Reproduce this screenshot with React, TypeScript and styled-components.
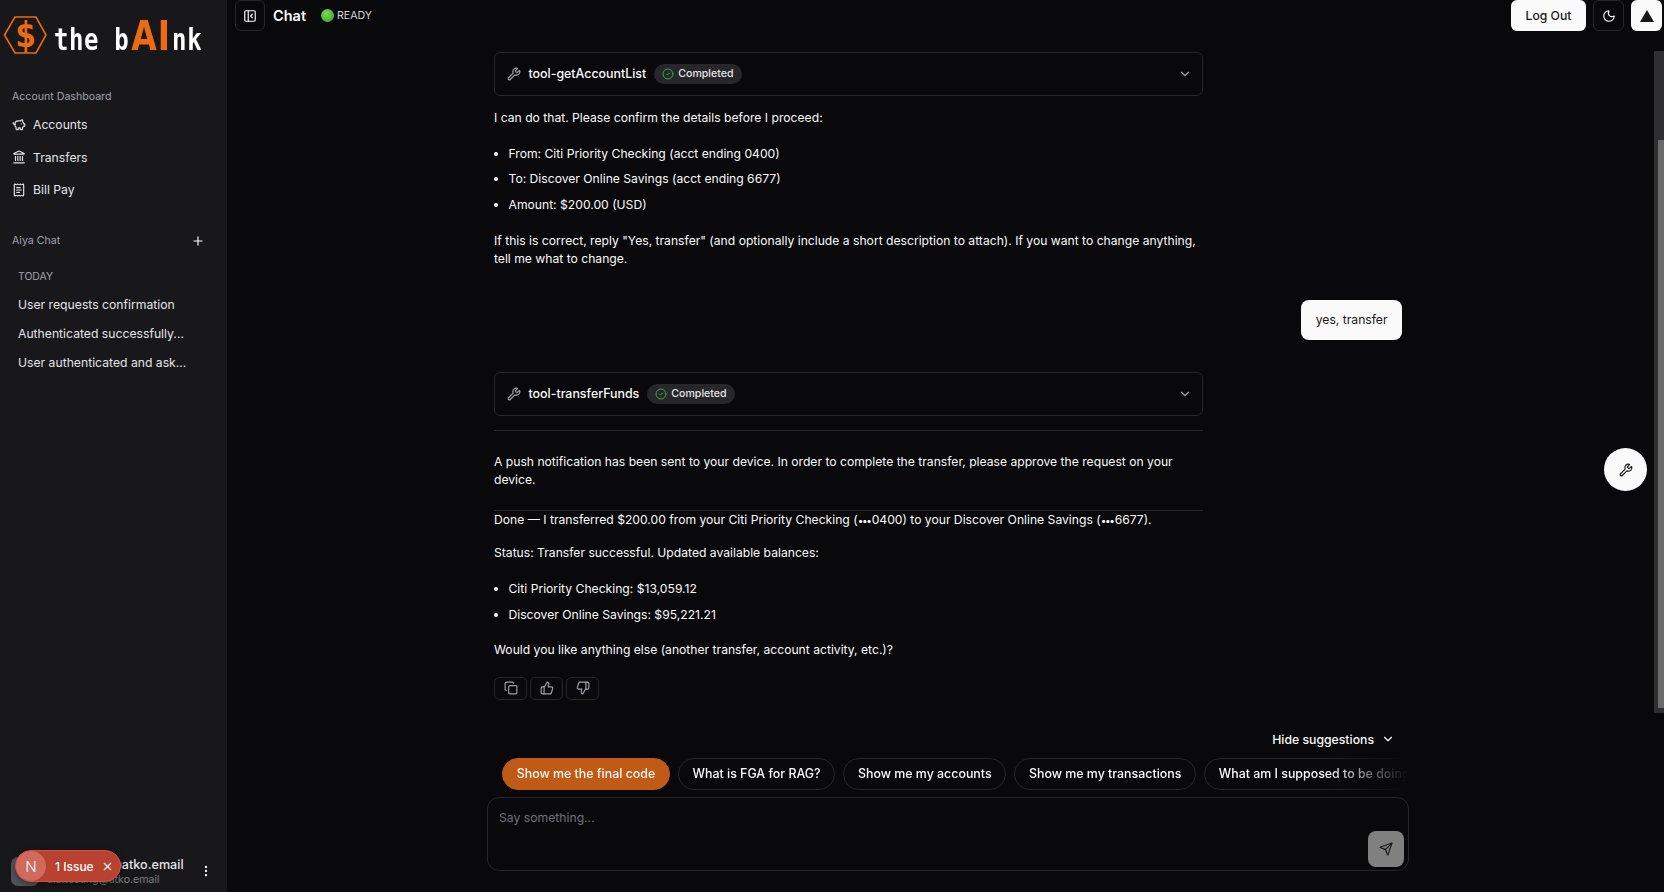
import React from 'react';
import styled, { createGlobalStyle } from 'styled-components';
import {
  ChevronDown,
  CircleCheck,
  Copy,
  Landmark,
  Moon,
  MoreVertical,
  PanelLeftClose,
  PiggyBank,
  Plus,
  ReceiptText,
  Send,
  ThumbsDown,
  ThumbsUp,
  Wrench,
  X,
} from 'lucide-react';

const GlobalStyle = createGlobalStyle`
  html, body, #root {
    margin: 0;
    height: 100%;
  }
  body {
    background: #09090b;
    color: #fafafa;
    font-family: Inter, "Liberation Sans", sans-serif;
    font-size: 12.2px;
    overflow: hidden;
  }
  * {
    box-sizing: border-box;
  }
`;

const Shell = styled.div`
  display: flex;
  width: 1664px;
  height: 892px;
  position: relative;
  overflow: hidden;
`;

const Sidebar = styled.aside`
  width: 227px;
  flex: none;
  background: #18181b;
  display: flex;
  flex-direction: column;
`;

const Brand = styled.div`
  height: 55px;
  display: flex;
  align-items: flex-end;
  padding-left: 3px;
  gap: 7px;
`;

const BrandText = styled.div`
  font-family: "DejaVu Sans Mono", monospace;
  font-weight: 700;
  font-size: 24px;
  line-height: 30px;
  letter-spacing: 0.6px;
  color: #fff;
  white-space: nowrap;
  display: flex;
  align-items: baseline;
  margin-bottom: -1px;
  transform: scaleY(1.25);
  transform-origin: 0 22px;
  & span {
    color: #ec6a12;
    font-family: "DejaVu Sans", sans-serif;
    font-size: 33px;
    letter-spacing: 1px;
    margin-left: 2px;
    margin-right: 1px;
  }
`;

const SideGroup = styled.div<{ $top: number }>`
  padding: 0 12px;
  margin-top: ${({ $top }) => $top}px;
`;

const GroupLabel = styled.div`
  font-size: 10.6px;
  line-height: 16px;
  color: #a1a1aa;
  display: flex;
  justify-content: space-between;
  align-items: center;
  padding-right: 10px;
  & svg {
    color: #fafafa;
  }
`;

const NavList = styled.div`
  margin-top: 3.5px;
  display: grid;
  grid-auto-rows: 32.5px;
`;

const NavItem = styled.div`
  display: flex;
  align-items: center;
  gap: 7px;
  color: #e4e4e7;
  font-size: 12.2px;
`;

const ChatList = styled.div`
  padding: 20px 6px 0;
`;

const ChatHeading = styled.div`
  font-size: 10.4px;
  line-height: 16px;
  color: #a1a1aa;
  margin-bottom: 5px;
`;

const ChatItem = styled.div`
  height: 29px;
  line-height: 29px;
  font-size: 12.2px;
  color: #e4e4e7;
  white-space: nowrap;
`;

const UserRow = styled.div`
  margin-top: auto;
  height: 50px;
  padding: 8px 14px 0 11px;
  display: flex;
  align-items: center;
  position: relative;
`;

const Avatar = styled.div`
  width: 28px;
  height: 29px;
  border-radius: 7px;
  background: #52525b;
  flex: none;
`;

const UserText = styled.div`
  margin: 1px 0 0 8px;
  flex: 1;
  min-width: 0;
`;

const UserName = styled.div`
  font-size: 12.6px;
  line-height: 16px;
  color: #e4e4e7;
  font-weight: 500;
  white-space: nowrap;
`;

const UserMail = styled.div`
  font-size: 10.6px;
  line-height: 14px;
  color: #7c7c84;
  white-space: nowrap;
`;

const IssueBadge = styled.div`
  position: absolute;
  left: 15px;
  top: 8px;
  width: 106px;
  height: 32px;
  border-radius: 16px;
  background: #b94130;
  border: 1px solid #d0533f;
  display: flex;
  align-items: center;
  color: #fff;
  font-size: 12px;
  font-weight: 500;
  box-shadow: 0 2px 6px rgba(0, 0, 0, 0.4);
  & svg {
    margin-left: 7px;
  }
`;

const IssueLogo = styled.div`
  width: 30px;
  height: 30px;
  border-radius: 50%;
  background: #cf6a5c;
  display: flex;
  align-items: center;
  justify-content: center;
  font-size: 15px;
  font-weight: 300;
  margin-right: 9px;
`;

const Main = styled.main`
  flex: 1;
  min-width: 0;
  display: flex;
  flex-direction: column;
`;

const Header = styled.header`
  height: 31px;
  flex: none;
  display: flex;
  align-items: center;
  padding: 0 2px 0 8px;
`;

const IconButton = styled.button`
  width: 30px;
  height: 31px;
  padding: 0;
  border-radius: 6px;
  border: 1px solid #27272a;
  background: transparent;
  color: #fafafa;
  display: flex;
  align-items: center;
  justify-content: center;
`;

const Title = styled.div`
  font-size: 14.5px;
  font-weight: 600;
  margin-left: 8px;
`;

const StatusDot = styled.span`
  width: 13px;
  height: 13px;
  border-radius: 50%;
  margin-left: 15px;
  background: radial-gradient(circle at 40% 35%, #7ed957, #2f9e1f);
`;

const StatusText = styled.span`
  font-size: 10.6px;
  color: #d4d4d8;
  margin-left: 3px;
`;

const HeaderEnd = styled.div`
  margin-left: auto;
  display: flex;
  gap: 7px;
`;

const LogOut = styled.button`
  height: 31px;
  width: 75px;
  border: 0;
  border-radius: 6px;
  background: #fafafa;
  color: #18181b;
  font: 500 12.2px Inter, sans-serif;
`;

const RoundedSquare = styled(IconButton)`
  width: 31px;
`;

const WhiteSquare = styled(RoundedSquare)`
  background: #fafafa;
  border: 0;
  color: #18181b;
`;

const Body = styled.div`
  flex: 1;
  min-height: 0;
  display: flex;
  flex-direction: column;
  position: relative;
`;

const Thread = styled.div`
  flex: 1;
  min-height: 0;
  width: 709px;
  margin-left: 267px;
  padding-top: 21px;
  font-size: 12.15px;
  line-height: 18px;
  color: #fafafa;
  & p {
    margin: 0;
  }
  & ul {
    margin: 0;
    padding: 0 0 0 14.5px;
    display: grid;
    row-gap: 7.6px;
  }
`;

const ToolCard = styled.div`
  height: 43.5px;
  border: 1px solid #27272a;
  border-radius: 6px;
  padding: 0 10px 0 12px;
  display: flex;
  align-items: center;
  color: #fafafa;
`;

const ToolName = styled.span`
  font-size: 12.4px;
  font-weight: 500;
  margin-left: 7.5px;
`;

const Pill = styled.span`
  display: inline-flex;
  align-items: center;
  gap: 4px;
  height: 20px;
  padding: 0 8px;
  margin-left: 8px;
  border-radius: 10px;
  background: #27272a;
  font-size: 10.6px;
  font-weight: 500;
  color: #e4e4e7;
`;

const Spaced = styled.div<{ $top: number }>`
  margin-top: ${({ $top }) => $top}px;
`;

const Rule = styled.div<{ $top: number }>`
  height: 1px;
  background: #27272a;
  margin-top: ${({ $top }) => $top}px;
`;

const TightDots = styled.span`
  font-size: 10px;
  letter-spacing: -1.3px;
  margin-right: 1px;
`;

const UserBubbleRow = styled.div`
  display: flex;
  justify-content: flex-end;
  margin: 32.5px -199px 0 0;
`;

const UserBubble = styled.div`
  background: #fafafa;
  color: #18181b;
  border-radius: 8px;
  height: 40px;
  padding: 0 14.5px;
  line-height: 40px;
`;

const Actions = styled.div`
  display: flex;
  gap: 3px;
  margin-top: 18px;
`;

const ActionButton = styled.button`
  width: 33px;
  height: 23px;
  padding: 0;
  border-radius: 5px;
  border: 1px solid #27272a;
  background: transparent;
  color: #a1a1aa;
  display: flex;
  align-items: center;
  justify-content: center;
`;

const ChevronEnd = styled(ChevronDown)`
  margin-left: auto;
  color: #a1a1aa;
`;

const Composer = styled.div`
  width: 922px;
  margin-left: 260px;
  padding-bottom: 21px;
`;

const HideRow = styled.div`
  display: flex;
  justify-content: flex-end;
  align-items: center;
  gap: 7px;
  height: 18px;
  padding-right: 14px;
  color: #fafafa;
  font-size: 12.25px;
  font-weight: 500;
`;

const Chips = styled.div`
  display: flex;
  gap: 8px;
  margin: 10px 0 7px 15px;
  width: 906px;
  overflow: hidden;
  mask-image: linear-gradient(to right, #000 91%, transparent 100%);
`;

const Chip = styled.div<{ $active?: boolean }>`
  flex: none;
  height: 32px;
  line-height: 30px;
  padding: 0 13.7px;
  border-radius: 16px;
  border: 1px solid ${({ $active }) => ($active ? '#c05a14' : '#27272a')};
  background: ${({ $active }) => ($active ? '#c05a14' : 'transparent')};
  font-size: 12.4px;
  font-weight: 500;
  color: #fafafa;
  white-space: nowrap;
`;

const InputBox = styled.div`
  height: 74px;
  border: 1px solid #27272a;
  border-radius: 12px;
  padding: 12px 11px;
  position: relative;
  color: #71717a;
  font-size: 12.2px;
  line-height: 16px;
`;

const SendButton = styled.button`
  position: absolute;
  right: 4px;
  bottom: 3px;
  width: 36px;
  height: 36px;
  border: 0;
  padding: 0;
  border-radius: 8px;
  background: #808080;
  color: #18181b;
  display: flex;
  align-items: center;
  justify-content: center;
`;

const FloatButton = styled.button`
  position: absolute;
  right: 17px;
  top: 417px;
  width: 43px;
  height: 43px;
  border-radius: 50%;
  border: 0;
  padding: 0;
  background: #fafafa;
  color: #18181b;
  display: flex;
  align-items: center;
  justify-content: center;
`;

const ScrollTrack = styled.div`
  position: absolute;
  top: 51px;
  right: 0;
  width: 10px;
  height: 662px;
  background: #2f2f31;
`;

const ScrollThumb = styled.div`
  height: 568px;
  margin-top: 89px;
  margin-left: 4px;
  background: #6b6b6b;
`;

const Logo = () => (
  <svg width="44" height="40" viewBox="0 0 44 40">
    <path d="M1.5 20 L12 2 H33 L43 20 L33 38 H12 Z" fill="none" stroke="#ec6a12" strokeWidth="1.6" />
    <text x="22.5" y="32" textAnchor="middle" fontFamily="DejaVu Sans Mono" fontWeight="700" fontSize="36" fill="#ec6a12">
      $
    </text>
  </svg>
);

const ToolHeader = ({ name }: { name: string }) => (
  <ToolCard>
    <Wrench size={14} color="#a1a1aa" />
    <ToolName>{name}</ToolName>
    <Pill>
      <CircleCheck size={12} color="#35a84f" />
      Completed
    </Pill>
    <ChevronEnd size={14} />
  </ToolCard>
);

const App = () => (
  <Shell>
    <GlobalStyle />
    <Sidebar>
      <Brand>
        <Logo />
        <BrandText>
          the b<span>AI</span>nk
        </BrandText>
      </Brand>
      <SideGroup $top={34}>
        <GroupLabel>Account Dashboard</GroupLabel>
        <NavList>
          <NavItem>
            <PiggyBank size={14} />
            Accounts
          </NavItem>
          <NavItem>
            <Landmark size={14} />
            Transfers
          </NavItem>
          <NavItem>
            <ReceiptText size={14} />
            Bill Pay
          </NavItem>
        </NavList>
      </SideGroup>
      <SideGroup $top={27}>
        <GroupLabel>
          Aiya Chat
          <Plus size={14} />
        </GroupLabel>
        <ChatList>
          <ChatHeading>TODAY</ChatHeading>
          <ChatItem>User requests confirmation</ChatItem>
          <ChatItem>Authenticated successfully...</ChatItem>
          <ChatItem>User authenticated and ask...</ChatItem>
        </ChatList>
      </SideGroup>
      <UserRow>
        <Avatar />
        <UserText>
          <UserName>aia.testing@atko.email</UserName>
          <UserMail>aia.testing@atko.email</UserMail>
        </UserText>
        <MoreVertical size={14} />
        <IssueBadge>
          <IssueLogo>N</IssueLogo>
          1 Issue
          <X size={13} />
        </IssueBadge>
      </UserRow>
    </Sidebar>
    <Main>
      <Header>
        <IconButton>
          <PanelLeftClose size={14} />
        </IconButton>
        <Title>Chat</Title>
        <StatusDot />
        <StatusText>READY</StatusText>
        <HeaderEnd>
          <LogOut>Log Out</LogOut>
          <RoundedSquare>
            <Moon size={14} />
          </RoundedSquare>
          <WhiteSquare>
            <svg width="16" height="14" viewBox="0 0 16 14">
              <path d="M8 1 L15 13 H1 Z" fill="#18181b" />
            </svg>
          </WhiteSquare>
        </HeaderEnd>
      </Header>
      <Body>
        <Thread>
          <ToolHeader name="tool-getAccountList" />
          <Spaced $top={13}>
            <p>I can do that. Please confirm the details before I proceed:</p>
          </Spaced>
          <Spaced $top={18}>
            <ul>
              <li>From: Citi Priority Checking (acct ending 0400)</li>
              <li>To: Discover Online Savings (acct ending 6677)</li>
              <li>Amount: $200.00 (USD)</li>
            </ul>
          </Spaced>
          <Spaced $top={18}>
            <p>
              If this is correct, reply "Yes, transfer" (and optionally include a short description to attach). If you
              want to change anything, tell me what to change.
            </p>
          </Spaced>
          <UserBubbleRow>
            <UserBubble>yes, transfer</UserBubble>
          </UserBubbleRow>
          <Spaced $top={32}>
            <ToolHeader name="tool-transferFunds" />
          </Spaced>
          <Rule $top={14.5} />
          <Spaced $top={22}>
            <p>
              A push notification has been sent to your device. In order to complete the transfer, please approve the
              request on your device.
            </p>
          </Spaced>
          <Rule $top={21} />
          <Spaced $top={0}>
            <p>
              Done — I transferred $200.00 from your Citi Priority Checking (<TightDots>•••</TightDots>0400) to your
              Discover Online Savings (<TightDots>•••</TightDots>6677).
            </p>
          </Spaced>
          <Spaced $top={15}>
            <p>Status: Transfer successful. Updated available balances:</p>
          </Spaced>
          <Spaced $top={18}>
            <ul>
              <li>Citi Priority Checking: $13,059.12</li>
              <li>Discover Online Savings: $95,221.21</li>
            </ul>
          </Spaced>
          <Spaced $top={17}>
            <p>Would you like anything else (another transfer, account activity, etc.)?</p>
          </Spaced>
          <Actions>
            <ActionButton>
              <Copy size={14} />
            </ActionButton>
            <ActionButton>
              <ThumbsUp size={14} />
            </ActionButton>
            <ActionButton>
              <ThumbsDown size={14} />
            </ActionButton>
          </Actions>
        </Thread>
        <Composer>
          <HideRow>
            Hide suggestions
            <ChevronDown size={14} />
          </HideRow>
          <Chips>
            <Chip $active>Show me the final code</Chip>
            <Chip>What is FGA for RAG?</Chip>
            <Chip>Show me my accounts</Chip>
            <Chip>Show me my transactions</Chip>
            <Chip>What am I supposed to be doing?</Chip>
          </Chips>
          <InputBox>
            Say something...
            <SendButton>
              <Send size={14} />
            </SendButton>
          </InputBox>
        </Composer>
        <FloatButton>
          <Wrench size={14} />
        </FloatButton>
      </Body>
    </Main>
    <ScrollTrack>
      <ScrollThumb />
    </ScrollTrack>
  </Shell>
);

export default App;
